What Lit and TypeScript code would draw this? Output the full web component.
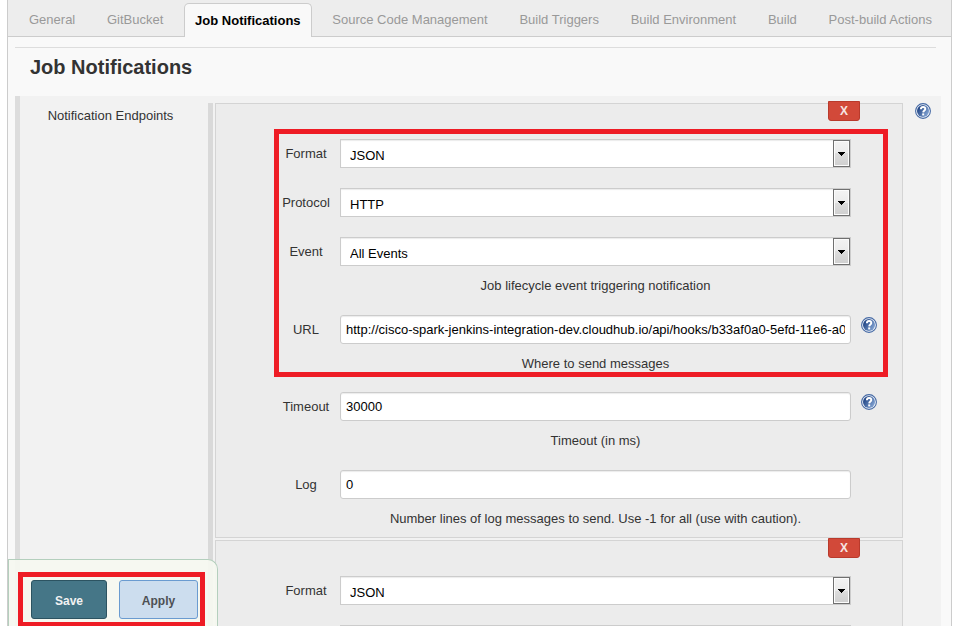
import { LitElement, html, css, svg, nothing } from "lit";
import { customElement, property } from "lit/decorators.js";

interface Field {
  id: string;
  label: string;
  kind: "select" | "text";
  value: string;
  hint?: string;
  help?: boolean;
}

const TABS = [
  "General",
  "GitBucket",
  "Job Notifications",
  "Source Code Management",
  "Build Triggers",
  "Build Environment",
  "Build",
  "Post-build Actions",
];

const endpointFields = (n: number): Field[] => [
  { id: `format${n}`, label: "Format", kind: "select", value: "JSON" },
  { id: `protocol${n}`, label: "Protocol", kind: "select", value: "HTTP" },
  {
    id: `event${n}`,
    label: "Event",
    kind: "select",
    value: "All Events",
    hint: "Job lifecycle event triggering notification",
  },
  {
    id: `url${n}`,
    label: "URL",
    kind: "text",
    value:
      "http://cisco-spark-jenkins-integration-dev.cloudhub.io/api/hooks/b33af0a0-5efd-11e6-a06",
    hint: "Where to send messages",
    help: true,
  },
];

const optionFields = (n: number): Field[] => [
  { id: `timeout${n}`, label: "Timeout", kind: "text", value: "30000", hint: "Timeout (in ms)", help: true },
  {
    id: `log${n}`,
    label: "Log",
    kind: "text",
    value: "0",
    hint: "Number lines of log messages to send. Use -1 for all (use with caution).",
  },
];

@customElement("help-button")
class HelpButton extends LitElement {
  static styles = css`
    :host {
      display: block;
      width: 16px;
      height: 16px;
    }
    .help {
      display: block;
      padding: 0;
      border: 0;
      background: none;
    }
    .icon {
      display: block;
      width: 16px;
      height: 16px;
    }
  `;

  render() {
    return html`<button class="help" type="button" aria-label="Help">
      ${svg`<svg class="icon" viewBox="0 0 16 16">
        <defs>
          <linearGradient id="g" x1="0" y1="0" x2="1" y2="0.6">
            <stop offset="0.15" stop-color="#1f4383" />
            <stop offset="1" stop-color="#7fa0d0" />
          </linearGradient>
        </defs>
        <circle cx="8" cy="8" r="7.4" fill="#f4f7fb" stroke="#4569a4" stroke-width="1.1" />
        <circle cx="8" cy="8" r="6" fill="url(#g)" />
        <path d="M5.9 6.3C5.9 4.7 6.8 4 8.1 4C9.4 4 10.3 4.8 10.3 6C10.3 7.5 8.3 7.6 8.2 9.4"
          fill="none" stroke="#fff" stroke-width="1.9" />
        <rect x="7.2" y="10.4" width="2" height="2" fill="#fff" />
      </svg>`}
    </button>`;
  }
}

@customElement("form-row")
class FormRow extends LitElement {
  @property({ attribute: false }) field!: Field;

  static styles = css`
    :host {
      display: grid;
      grid-template-columns: 54px minmax(0, 1fr) 16px;
      column-gap: 10px;
    }
    .label {
      line-height: 29px;
      text-align: center;
      margin-right: -3px;
      padding-right: 3px;
    }
    .control {
      position: relative;
      margin-left: -3px;
    }
    .select,
    .text {
      box-sizing: border-box;
      display: block;
      width: 100%;
      height: 29px;
      margin: 0;
      border: 1px solid #ccc;
      background: #fff;
      box-shadow: inset 0 1px 1px rgba(0, 0, 0, 0.08);
      color: #000;
      font: inherit;
      outline: none;
    }
    .select {
      appearance: none;
      border-radius: 0;
      padding: 4px 28px 0 9px;
    }
    .text {
      border-radius: 3px;
      padding: 0 5px;
    }
    .arrow {
      position: absolute;
      top: 1px;
      right: 1px;
      box-sizing: border-box;
      width: 17px;
      height: 27px;
      display: grid;
      place-items: center;
      border: 1px solid #707070;
      background: linear-gradient(#f3f3f3, #ebebeb 50%, #dddddd 50%, #cfcfcf);
      box-shadow: inset 0 0 0 1px #fcfcfc;
      pointer-events: none;
    }
    .triangle {
      display: block;
      width: 7px;
      height: 5px;
    }
    .hint {
      margin: 11px 0 0;
      line-height: 17px;
      text-align: center;
    }
    .row-help {
      margin-top: 2px;
    }
  `;

  render() {
    const f = this.field;
    return html`
      <label class="label" for=${f.id}>${f.label}</label>
      <div class="control">
        ${f.kind === "select"
          ? html`<select class="select" id=${f.id}>
                <option>${f.value}</option>
              </select>
              <span class="arrow"
                ><svg class="triangle" viewBox="0 0 7 5" shape-rendering="crispEdges">
                  <path d="M0 1h7v1h-1v1h-1v1h-1v1h-1v-1h-1v-1h-1v-1h-1z" /></svg
              ></span>`
          : html`<input class="text" id=${f.id} type="text" .value=${f.value} />`}
        ${f.hint ? html`<p class="hint">${f.hint}</p>` : nothing}
      </div>
      ${f.help ? html`<help-button class="row-help"></help-button>` : nothing}
    `;
  }
}

@customElement("endpoint-card")
class EndpointCard extends LitElement {
  @property({ type: Number }) index = 0;
  @property({ type: Boolean }) marked = false;

  static styles = css`
    :host {
      display: block;
      position: relative;
      border: 1px solid #d4d4d4;
      background: #ececec;
      padding: 25px 14px 10px 58px;
    }
    .delete {
      position: absolute;
      top: -3px;
      right: 42px;
      width: 32px;
      height: 20px;
      padding: 0;
      border: 1px solid #b93a2c;
      border-radius: 0 0 3px 3px;
      background: #d24939;
      color: #f6e4e2;
      font: bold 12px/18px "Liberation Sans", Arial, sans-serif;
    }
    .group {
      border: 5px solid transparent;
      padding: 5px 6px 0 0;
    }
    .marked {
      border-color: #ee1c25;
    }
    .options {
      padding: 15px 11px 0 5px;
    }
    .row + .row {
      margin-top: 20px;
    }
    .hinted + .row {
      margin-top: 21px;
    }
  `;

  private rows(fields: Field[]) {
    return fields.map(
      (f) => html`<form-row class=${f.hint ? "row hinted" : "row"} .field=${f}></form-row>`
    );
  }

  render() {
    return html`
      <button class="delete" type="button" aria-label="Delete endpoint">X</button>
      <div class=${this.marked ? "group marked" : "group"}>${this.rows(endpointFields(this.index))}</div>
      <div class="options">${this.rows(optionFields(this.index))}</div>
    `;
  }
}

@customElement("app-root")
class AppRoot extends LitElement {
  static styles = css`
    :host {
      display: block;
      height: 100vh;
      overflow: auto;
      scrollbar-width: none;
      background: #fff;
      color: #333;
      font: 13px/18px "Liberation Sans", Arial, sans-serif;
    }
    .page {
      margin: 0 2px 0 7px;
      border: solid #ccc;
      border-width: 0 1px;
      background: #f9f9f9;
    }
    .tabs {
      display: flex;
      justify-content: space-between;
      align-items: flex-end;
      height: 36px;
      padding: 0 8px 0 10px;
      border-bottom: 1px solid #ccc;
      background: #ededed;
    }
    .tab {
      padding: 0 10px;
      border: 1px solid transparent;
      border-bottom: 0;
      border-radius: 5px 5px 0 0;
      color: #999;
      line-height: 33px;
      text-decoration: none;
      white-space: nowrap;
    }
    .active {
      margin-bottom: -1px;
      border-color: #ccc;
      background: #f9f9f9;
      color: #000;
      font-weight: bold;
    }
    .title {
      margin: 10px 15px 0 7px;
      padding: 7px 15px 17px;
      border-top: 1px solid #ddd;
      font-size: 20px;
      line-height: 24px;
    }
    .section {
      display: grid;
      grid-template-columns: 188px minmax(0, 1fr) 16px;
      margin: 0 10px 0 7px;
      padding: 7px 10px 7px 0;
      border-left: 5px solid #ddd;
      background: #f2f2f2;
    }
    .section-label {
      padding: 4px 7px 0 0;
      text-align: center;
    }
    .endpoints {
      display: grid;
      gap: 2px;
      margin-right: 12px;
      padding-left: 2px;
      border-left: 5px solid #d9d9d9;
    }
    .actions {
      position: fixed;
      left: 8px;
      bottom: -1px;
      padding: 12px 12px 0 9px;
      border: 1px solid #b4cfbd;
      border-bottom: 0;
      border-radius: 0 10px 0 0;
      background: rgba(245, 248, 240, 0.94);
    }
    .buttons {
      display: flex;
      gap: 12px;
      padding: 3px 2px 3px 8px;
      border: 5px solid #ee1c25;
    }
    .button {
      width: 76px;
      height: 39px;
      padding: 2px 0 0;
      border: 1px solid #2c5361;
      border-radius: 3px;
      background: #457687;
      color: #f2f2f2;
      font: bold 12px/18px "Liberation Sans", Arial, sans-serif;
    }
    .apply {
      width: 79px;
      border-color: #6a9bd0;
      background: #ccddee;
      color: #4d5054;
    }
  `;

  render() {
    return html`
      <main class="page">
        <nav class="tabs">
          ${TABS.map(
            (t) => html`<a class=${t === "Job Notifications" ? "tab active" : "tab"} href="#">${t}</a>`
          )}
        </nav>
        <h1 class="title">Job Notifications</h1>
        <section class="section">
          <div class="section-label">Notification Endpoints</div>
          <div class="endpoints">
            <endpoint-card .index=${0} .marked=${true}></endpoint-card>
            <endpoint-card .index=${1}></endpoint-card>
          </div>
          <help-button></help-button>
        </section>
      </main>
      <div class="actions">
        <div class="buttons">
          <button class="button" type="button">Save</button>
          <button class="button apply" type="button">Apply</button>
        </div>
      </div>
    `;
  }
}
